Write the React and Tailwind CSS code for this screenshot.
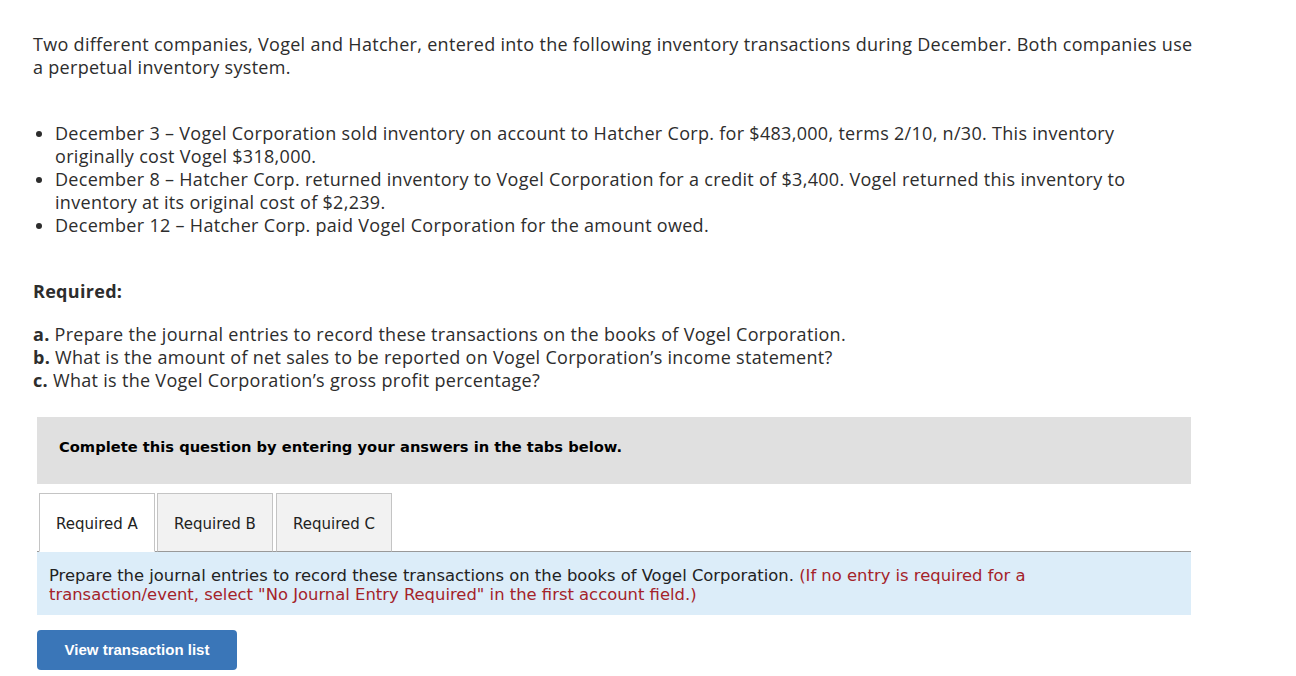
import React, { useState } from 'react';

const tabs = ['Required A', 'Required B', 'Required C'];

const App = () => {
  const [active, setActive] = useState(0);

  return (
    <div className="min-h-screen bg-white text-[#2d2d2d] font-['Open_Sans',sans-serif]">
      <div className="ml-[33px] pt-[33px] w-[1163px] text-[18px] leading-[23px] tracking-[0.3px]">
        <p>
          Two different companies, Vogel and Hatcher, entered into the following inventory transactions during December. Both companies use a perpetual inventory system.
        </p>

        <ul className="mt-[43px] pl-[22px] list-disc">
          <li>December 3 – Vogel Corporation sold inventory on account to Hatcher Corp. for $483,000, terms 2/10, n/30. This inventory originally cost Vogel $318,000.</li>
          <li>December 8 – Hatcher Corp. returned inventory to Vogel Corporation for a credit of $3,400. Vogel returned this inventory to inventory at its original cost of $2,239.</li>
          <li>December 12 – Hatcher Corp. paid Vogel Corporation for the amount owed.</li>
        </ul>

        <p className="mt-[43px] font-bold">Required:</p>

        <div className="mt-[20px]">
          <p><b>a.</b> Prepare the journal entries to record these transactions on the books of Vogel Corporation.</p>
          <p><b>b.</b> What is the amount of net sales to be reported on Vogel Corporation’s income statement?</p>
          <p><b>c.</b> What is the Vogel Corporation’s gross profit percentage?</p>
        </div>
      </div>

      {/* Answer area */}
      <div className="ml-[37px] w-[1154px] mt-[25px] font-['DejaVu_Sans',Verdana,sans-serif]">
        <div className="h-[67px] bg-[#e0e0e0] flex items-center pl-[22px] pb-[7px]">
          <span className="text-[14.7px] font-bold text-black">Complete this question by entering your answers in the tabs below.</span>
        </div>

        <div className="mt-[9px] flex items-end border-b border-[#999999]">
          {tabs.map((t, i) => (
            <button
              key={t}
              onClick={() => setActive(i)}
              className={`h-[59px] -mb-px w-[116px] pt-[3px] text-[15px] text-[#222] border border-[#c4c4c4] ${
                i === 2 ? 'ml-[3px]' : 'ml-[2px]'
              } ${active === i ? 'bg-white border-b-white' : 'bg-[#f2f2f2] border-b-[#999999]'}`}
            >
              {t}
            </button>
          ))}
        </div>

        <div className="h-[63px] bg-[#dcedf9] px-[12px] pt-[14px] text-[16.4px] leading-[19px]">
          <span className="text-[#222]">Prepare the journal entries to record these transactions on the books of Vogel Corporation. </span>
          <span className="text-[#a4232a]">(If no entry is required for a<br />transaction/event, select "No Journal Entry Required" in the first account field.)</span>
        </div>

        <button className="mt-[15px] w-[200px] h-[40px] pt-[1px] rounded-[4px] bg-[#3a76b8] text-white text-[15px] font-bold font-['Liberation_Sans',Arial,sans-serif]">
          View transaction list
        </button>
      </div>
    </div>
  );
};

export default App;
